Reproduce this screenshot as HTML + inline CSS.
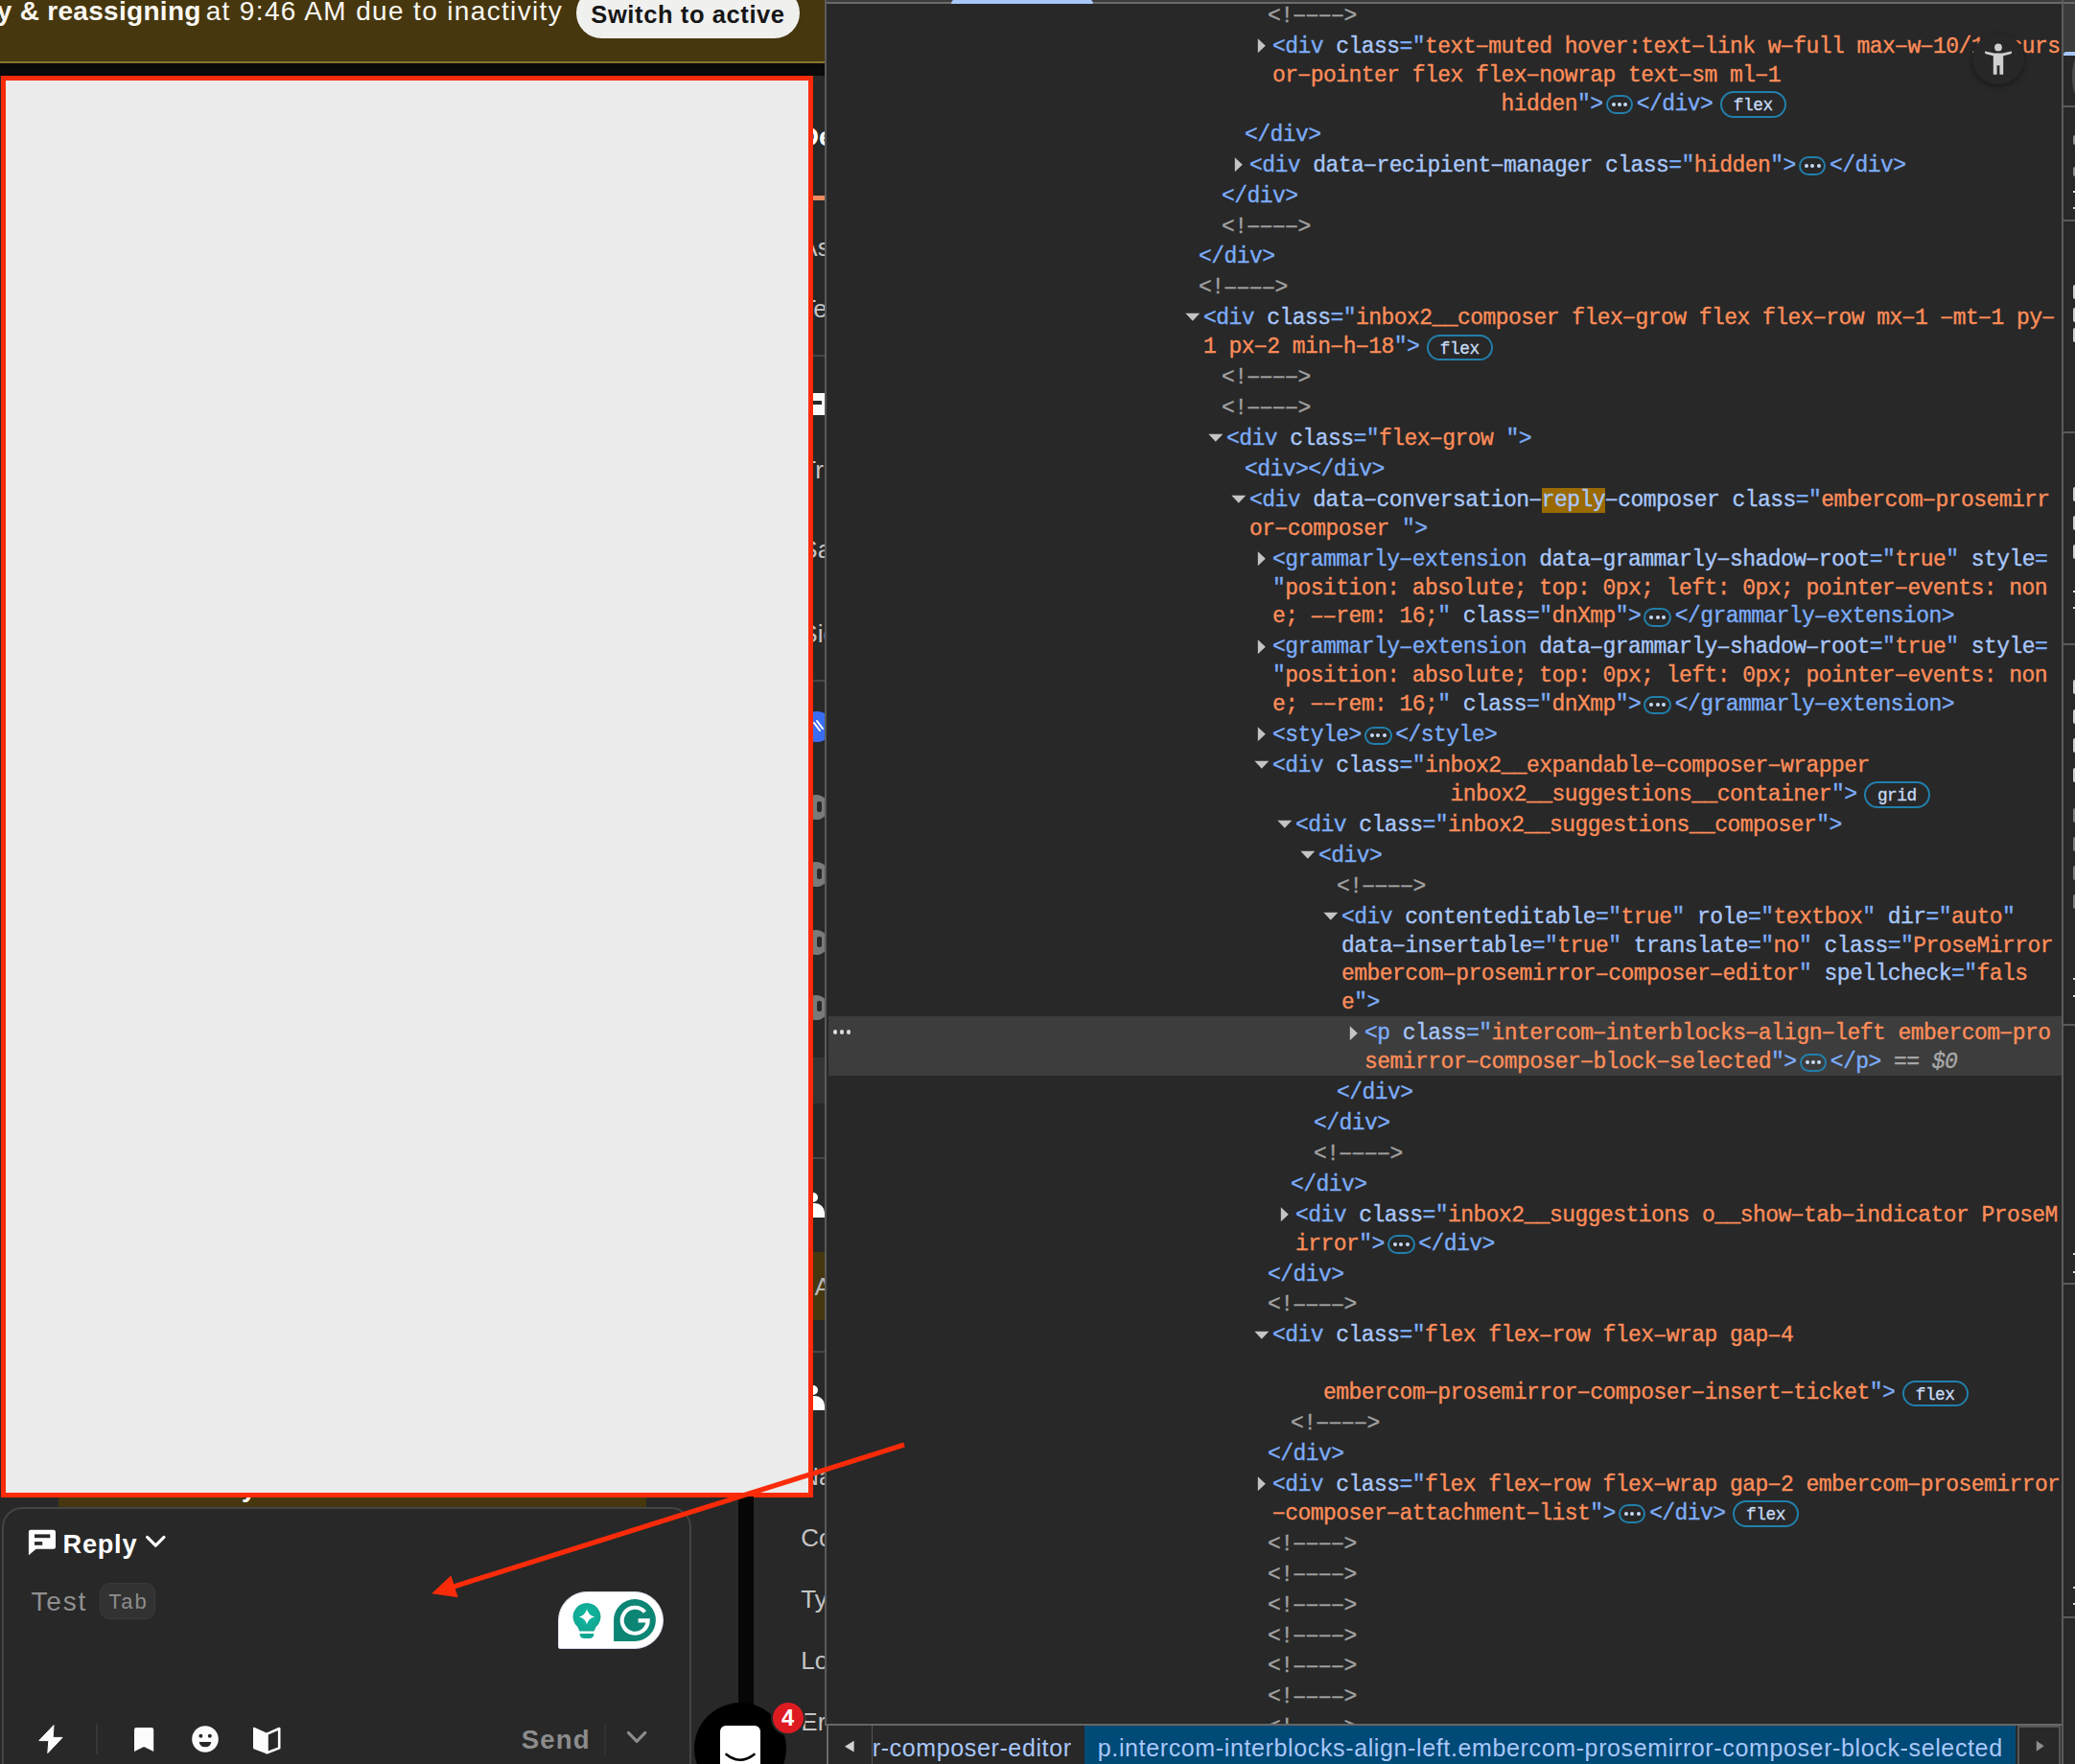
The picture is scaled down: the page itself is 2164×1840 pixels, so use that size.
<!DOCTYPE html>
<html><head><meta charset="utf-8"><title>Inbox</title>
<style>
*{box-sizing:border-box}
html,body{margin:0;padding:0;background:#282828}
body{width:2164px;height:1840px;overflow:hidden;position:relative;background:#282828;font-family:"Liberation Sans",sans-serif}
#app{position:absolute;left:0;top:0;width:860px;height:1840px;background:#282828;overflow:hidden}
#dt{position:absolute;left:860px;top:0;width:1304px;height:1840px;background:#282828;overflow:hidden}
/* devtools tree: coordinates are page coords, shifted */
#tree{position:absolute;left:-860px;top:0;width:2164px;height:1798px;overflow:hidden}
.ln{position:absolute;white-space:pre;font-family:"Liberation Mono",monospace;font-size:23px;letter-spacing:-0.557px;line-height:29.9px;height:29.9px;color:#7cacf8;-webkit-text-stroke:0.35px}
.t{color:#7cacf8}.a{color:#a8c7fa}.v{color:#fe8d59}.c{color:#a1a1a1}
.h{color:#a8c7fa;background:#9a6a00}
.ln u{text-decoration:none;position:relative;top:1.2px}
.d{color:#a8a8a8;font-style:italic}
.el{display:inline-block;vertical-align:top;width:28.5px;height:19.5px;margin:4.6px 3.7px 0 3.2px;border:2px solid #217fab;border-radius:10px;position:relative}
.el i{position:absolute;top:5.7px;width:4px;height:4px;border-radius:50%;background:#c7dbf5}
.el i:nth-child(1){left:4px}.el i:nth-child(2){left:10.3px}.el i:nth-child(3){left:16.6px}
.bd{display:inline-block;vertical-align:top;height:27.8px;margin:0.3px 0 0 7.4px;padding:0 12.1px;border:2px solid #217fab;border-radius:14px;font-size:17.8px;letter-spacing:-0.45px;line-height:26px;color:#c7dbf5;-webkit-text-stroke:0.3px}
.ar{position:absolute;fill:#c4c4c4}
.selrow{position:absolute;left:864px;width:1286px;background:#3d3d3d}
.seldots{position:absolute;left:868.5px;width:22px;height:5px}
.seldots i{position:absolute;top:0;width:4.6px;height:4.6px;border-radius:50%;background:#dadada}
.seldots i:nth-child(1){left:0}.seldots i:nth-child(2){left:7.1px}.seldots i:nth-child(3){left:14.3px}
</style></head>
<body>
<div id="app">

<style>
#banner{position:absolute;left:0;top:0;width:860px;height:64px;background:#46370f;border-bottom:0}
#bline{position:absolute;left:0;top:63.5px;width:860px;height:2.5px;background:#8a7332}
#bblack{position:absolute;left:0;top:66px;width:860px;height:13px;background:#0a0a0a}
#btxt{position:absolute;left:-3.3px;top:-7.8px;white-space:pre;color:#fbf8f2;font-size:28px;line-height:40px;height:40px}
#btxt b{font-weight:bold;letter-spacing:.3px}
#btxt span{letter-spacing:1.35px;font-size:28px;margin-left:-4.2px}
#swbtn{position:absolute;left:601px;top:-13px;width:233px;height:53px;border-radius:27px;background:#f0f0ef;color:#161616;font-weight:bold;font-size:25.5px;letter-spacing:.6px;line-height:57px;text-align:center;white-space:pre}
#redbox{position:absolute;left:1.2px;top:78.5px;width:847.3px;height:1483.5px;background:#ebebeb;border:5.3px solid #f92b09}
.stripL{position:absolute;left:835.3px;white-space:pre;font-size:26px;line-height:30px;height:30px;color:#c4c4c4}
#comp{position:absolute;left:1.8px;top:1572px;width:719.3px;height:300px;border:2px solid #444;border-radius:21px}
#brown{position:absolute;left:61px;top:1561px;width:613px;height:11px;background:#46370f}
#vbar{position:absolute;left:770px;top:1561px;width:16px;height:290px;background:#060606}
#mcircle{position:absolute;left:724px;top:1776px;width:96px;height:96px;border-radius:50%;background:#000}
#mwhite{position:absolute;left:751px;top:1800px;width:42px;height:60px;border-radius:6px;background:#fff}
#badge{position:absolute;left:803.6px;top:1774px;width:36px;height:36px;border-radius:50%;background:#df1b22;border:2.2px solid #282828;color:#fff;font-weight:bold;font-size:23.6px;line-height:32.2px;text-align:center}
</style>
<div id="banner"></div><div id="bline"></div><div id="bblack"></div>
<div id="btxt"><b>y &amp; reassigning</b><span> at 9:46 AM due to inactivity</span></div>
<div id="swbtn">Switch to active</div>

<!-- right-side strip content (mostly hidden behind red box) -->
<div class="stripL" style="top:127.7px;left:833.8px;color:#fff;font-weight:bold;font-size:28px">De</div>
<div style="position:absolute;left:840px;top:204.3px;width:20px;height:5px;background:#ee8a5e"></div>
<div class="stripL" style="top:243px">As</div>
<div class="stripL" style="top:306.5px">Te</div>
<div style="position:absolute;left:840px;top:370px;width:20px;height:1.5px;background:#464646"></div>
<div style="position:absolute;left:840px;top:409.5px;width:20px;height:23px;background:#fafafa"></div>
<div style="position:absolute;left:846px;top:417.5px;width:10.5px;height:4px;background:#282828"></div>
<div class="stripL" style="top:475px">Tr</div>
<div class="stripL" style="top:558px">Sa</div>
<div class="stripL" style="top:645.5px">Sid</div>
<div style="position:absolute;left:840px;top:709px;width:20px;height:1.5px;background:#464646"></div>
<div style="position:absolute;left:836px;top:742px;width:32px;height:32px;border-radius:50%;background:#3a6df2"></div>
<svg style="position:absolute;left:846px;top:748px" width="16" height="20" viewBox="0 0 16 20"><path d="M3 6 L9 14 M6 4 L12 12" stroke="#fff" stroke-width="2" fill="none" stroke-linecap="round"/></svg>
<div style="position:absolute;left:838px;top:829px;width:26px;height:26px;border-radius:50%;background:#7a7a7a"></div>
<div style="position:absolute;left:838px;top:899px;width:26px;height:26px;border-radius:50%;background:#7a7a7a"></div>
<div style="position:absolute;left:838px;top:970px;width:26px;height:26px;border-radius:50%;background:#7a7a7a"></div>
<div style="position:absolute;left:838px;top:1037.5px;width:26px;height:26px;border-radius:50%;background:#7a7a7a"></div>
<div style="position:absolute;left:852px;top:836px;width:5px;height:11px;background:#282828;border-radius:2px"></div>
<div style="position:absolute;left:852px;top:906px;width:5px;height:11px;background:#282828;border-radius:2px"></div>
<div style="position:absolute;left:852px;top:977px;width:5px;height:11px;background:#282828;border-radius:2px"></div>
<div style="position:absolute;left:852px;top:1044px;width:5px;height:11px;background:#282828;border-radius:2px"></div>
<div style="position:absolute;left:840px;top:1103px;width:20px;height:48px;background:#343434"></div>
<div style="position:absolute;left:840px;top:1207px;width:20px;height:1.5px;background:#464646"></div>
<div style="position:absolute;left:843px;top:1244px;width:10px;height:10px;border-radius:50%;background:#fff"></div>
<div style="position:absolute;left:838px;top:1255px;width:22px;height:14.5px;border-radius:10px 10px 0 0;background:#fff"></div>
<div style="position:absolute;left:840px;top:1306px;width:20px;height:71px;background:#46370f"></div>
<div class="stripL" style="top:1326.5px;left:849.5px;color:#b8b8b8">A</div>
<div style="position:absolute;left:840px;top:1409px;width:20px;height:1.5px;background:#464646"></div>
<div style="position:absolute;left:843px;top:1445px;width:10px;height:10px;border-radius:50%;background:#fff"></div>
<div style="position:absolute;left:838px;top:1456px;width:22px;height:14.5px;border-radius:10px 10px 0 0;background:#fff"></div>
<div class="stripL" style="top:1524.5px">Na</div>
<div class="stripL" style="top:1588.5px">Co</div>
<div class="stripL" style="top:1652.5px">Ty</div>
<div class="stripL" style="top:1716.5px">Lo</div>
<div class="stripL" style="top:1781px">Er</div>

<div id="brown"></div>
<div style="position:absolute;left:252px;top:1552px;color:#fff;font-weight:bold;font-size:27px;line-height:1;height:19.5px;overflow:hidden;width:20px"><span style="position:relative;top:-13px">y</span></div>
<div id="redbox"></div>
<div id="vbar"></div>

<div id="comp"></div>
<!-- Reply icon -->
<svg style="position:absolute;left:29px;top:1594px" width="31" height="30" viewBox="0 0 31 30">
 <path d="M3 1.7 H26.5 Q29 1.7 29 4.2 V19.3 Q29 21.8 26.5 21.8 H8.6 L0.9 28.2 V3.8 Q0.9 1.7 3 1.7 Z" fill="#fff"/>
 <rect x="7" y="6.4" width="16.3" height="3.8" fill="#282828"/>
 <rect x="7" y="14.1" width="8.2" height="3.7" fill="#282828"/>
</svg>
<div style="position:absolute;left:65.5px;top:1594px;color:#fff;font-weight:bold;font-size:27.2px;line-height:34px;height:34px;white-space:pre;letter-spacing:.75px">Reply</div>
<svg style="position:absolute;left:150px;top:1599px" width="25" height="18" viewBox="0 0 25 18"><path d="M3.6 4.4 L12.3 13.2 L21 4.4" stroke="#fff" stroke-width="3.1" fill="none" stroke-linecap="round" stroke-linejoin="round"/></svg>
<div style="position:absolute;left:32.5px;top:1653.8px;color:#8f8f8f;font-size:28px;line-height:34px;height:34px;white-space:pre;letter-spacing:1.8px">Test</div>
<div style="position:absolute;left:104px;top:1651px;width:58px;height:38px;border-radius:10px;background:#323232;border:1.5px solid #3a3a3a;color:#8d8d8d;font-size:22px;line-height:37.6px;text-align:center;letter-spacing:2px;text-indent:2px">Tab</div>

<!-- toolbar icons -->
<svg style="position:absolute;left:38px;top:1796px" width="30" height="36" viewBox="0 0 30 36"><path d="M18 3.6 L2.8 19.6 H12.8 L11.8 32.6 L27 16.4 H17.2 Z" fill="#fcfcfc" stroke="#fcfcfc" stroke-width="1" stroke-linejoin="round"/></svg>
<div style="position:absolute;left:100.2px;top:1798px;width:1.8px;height:32px;background:#373737"></div>
<svg style="position:absolute;left:138px;top:1800px" width="24" height="30" viewBox="0 0 24 30"><path d="M4 2 H20 Q22.2 2 22.2 4.2 V27 L12.1 22 L2 27 V4.2 Q2 2 4 2 Z" fill="#fcfcfc"/></svg>
<svg style="position:absolute;left:199px;top:1799px" width="30" height="30" viewBox="0 0 30 30"><circle cx="15" cy="15" r="13.8" fill="#fcfcfc"/><circle cx="10.4" cy="11.7" r="2" fill="#282828"/><circle cx="19.8" cy="11.7" r="2" fill="#282828"/><path d="M8.7 17.9 H21.3 Q20.6 23.2 15 23.2 Q9.4 23.2 8.7 17.9 Z" fill="#282828"/></svg>
<svg style="position:absolute;left:262px;top:1799px" width="33" height="33" viewBox="0 0 33 33"><path d="M2 3.6 Q2 2.4 3.2 2.8 L16.5 8.8 V30.4 L3.2 25.6 Q2 25.2 2 24 Z" fill="#fcfcfc"/><path d="M16.5 9.6 L29.2 4 V24.4 L16.5 29.2 Z" fill="none" stroke="#fcfcfc" stroke-width="2.6" stroke-linejoin="round"/></svg>

<div style="position:absolute;left:543.8px;top:1797.6px;letter-spacing:1.1px;color:#8c8c8c;font-weight:bold;font-size:27.6px;line-height:34px;height:34px;white-space:pre">Send</div>
<div style="position:absolute;left:630px;top:1798px;width:1.6px;height:32px;background:#313131"></div>
<svg style="position:absolute;left:651px;top:1802px" width="26" height="20" viewBox="0 0 26 20"><path d="M4.4 5.4 L13.1 14.3 L21.8 5.4" stroke="#8c8c8c" stroke-width="3.1" fill="none" stroke-linecap="round" stroke-linejoin="round"/></svg>

<!-- Grammarly widget -->
<div style="position:absolute;left:582px;top:1659.7px;width:110px;height:60.6px;background:#fff;border:1.6px solid #d9d9ea;border-radius:30px 30px 30px 2px"></div>
<svg style="position:absolute;left:594px;top:1668px" width="40" height="46" viewBox="0 0 40 46">
 <defs><radialGradient id="gb" cx="50%" cy="45%" r="60%"><stop offset="0" stop-color="#0fb8a2"/><stop offset="1" stop-color="#12a590"/></radialGradient></defs>
 <path d="M18 4 A14.3 14.3 0 0 1 27.4 29.2 L25.6 33.6 H10.4 L8.6 29.2 A14.3 14.3 0 0 1 18 4 Z" fill="url(#gb)"/>
 <path d="M10.6 36.1 H25.4 Q25.4 40.9 21.2 40.9 H14.8 Q10.6 40.9 10.6 36.1 Z" fill="#10a792"/>
 <path d="M18 10.4 Q19.6 16.8 26.2 18.4 Q19.6 20 18 26.6 Q16.4 20 9.8 18.4 Q16.4 16.8 18 10.4 Z" fill="#fff"/>
</svg>
<svg style="position:absolute;left:638px;top:1666px" width="48" height="48" viewBox="0 0 48 48">
 <path d="M24 2.1 A21.9 21.9 0 0 1 24 45.9 H2.1 V24 A21.9 21.9 0 0 1 24 2.1 Z" fill="#0c8574"/>
 <path d="M34.5 15.5 A13.5 13.5 0 1 0 37.7 24.4 H27.6" fill="none" stroke="#fff" stroke-width="4.1"/>
</svg>

<div id="mcircle"></div><div id="mwhite"></div>
<svg style="position:absolute;left:752px;top:1824px" width="40" height="16" viewBox="0 0 40 16"><path d="M5.5 6 Q20 17.5 34.5 6" stroke="#000" stroke-width="2.6" fill="none" stroke-linecap="round"/></svg>
<div id="badge">4</div>

</div>
<div id="dt">
  <div id="tree">
<div class="ln" style="left:1322.10px;top:3.15px"><span class="c">&lt;!<u>−</u><u>−</u><u>−</u><u>−</u>&gt;</span></div>
<svg class="ar" style="left:1311.20px;top:40.42px" width="10" height="16" viewBox="0 0 10 16"><path d="M0.8 0.3 L0.8 15.3 L8.8 7.8 Z"/></svg>
<div class="ln" style="left:1327.10px;top:35.06px"><span class="t">&lt;div </span><span class="a">class</span><span class="t">=&quot;</span><span class="v">text<u>−</u>muted hover:text<u>−</u>link w<u>−</u>full max<u>−</u>w<u>−</u>10/12 curs</span></div>
<div class="ln" style="left:1327.10px;top:64.98px"><span class="v">or<u>−</u>pointer flex flex<u>−</u>nowrap text<u>−</u>sm ml<u>−</u>1</span></div>
<div class="ln" style="left:1327.10px;top:94.89px"><span class="v">                  hidden</span><span class="t">&quot;&gt;</span><span class="el"><i></i><i></i><i></i></span><span class="t">&lt;/div&gt;</span><span class="bd">flex</span></div>
<div class="ln" style="left:1298.10px;top:126.81px"><span class="t">&lt;/div&gt;</span></div>
<svg class="ar" style="left:1287.20px;top:164.08px" width="10" height="16" viewBox="0 0 10 16"><path d="M0.8 0.3 L0.8 15.3 L8.8 7.8 Z"/></svg>
<div class="ln" style="left:1303.10px;top:158.72px"><span class="t">&lt;div </span><span class="a">data<u>−</u>recipient<u>−</u>manager class</span><span class="t">=&quot;</span><span class="v">hidden</span><span class="t">&quot;&gt;</span><span class="el"><i></i><i></i><i></i></span><span class="t">&lt;/div&gt;</span></div>
<div class="ln" style="left:1274.10px;top:190.64px"><span class="t">&lt;/div&gt;</span></div>
<div class="ln" style="left:1274.10px;top:222.55px"><span class="c">&lt;!<u>−</u><u>−</u><u>−</u><u>−</u>&gt;</span></div>
<div class="ln" style="left:1250.10px;top:254.47px"><span class="t">&lt;/div&gt;</span></div>
<div class="ln" style="left:1250.10px;top:286.38px"><span class="c">&lt;!<u>−</u><u>−</u><u>−</u><u>−</u>&gt;</span></div>
<svg class="ar" style="left:1235.90px;top:326.46px" width="16" height="10" viewBox="0 0 16 10"><path d="M0.3 0.8 L15.3 0.8 L7.8 8.8 Z"/></svg>
<div class="ln" style="left:1255.10px;top:318.30px"><span class="t">&lt;div </span><span class="a">class</span><span class="t">=&quot;</span><span class="v">inbox2__composer flex<u>−</u>grow flex flex<u>−</u>row mx<u>−</u>1 <u>−</u>mt<u>−</u>1 py<u>−</u></span></div>
<div class="ln" style="left:1255.10px;top:348.22px"><span class="v">1 px<u>−</u>2 min<u>−</u>h<u>−</u>18</span><span class="t">&quot;&gt;</span><span class="bd">flex</span></div>
<div class="ln" style="left:1274.10px;top:380.13px"><span class="c">&lt;!<u>−</u><u>−</u><u>−</u><u>−</u>&gt;</span></div>
<div class="ln" style="left:1274.10px;top:412.05px"><span class="c">&lt;!<u>−</u><u>−</u><u>−</u><u>−</u>&gt;</span></div>
<svg class="ar" style="left:1259.90px;top:452.12px" width="16" height="10" viewBox="0 0 16 10"><path d="M0.3 0.8 L15.3 0.8 L7.8 8.8 Z"/></svg>
<div class="ln" style="left:1279.10px;top:443.96px"><span class="t">&lt;div </span><span class="a">class</span><span class="t">=&quot;</span><span class="v">flex<u>−</u>grow </span><span class="t">&quot;&gt;</span></div>
<div class="ln" style="left:1298.10px;top:475.88px"><span class="t">&lt;div&gt;&lt;/div&gt;</span></div>
<svg class="ar" style="left:1283.90px;top:515.95px" width="16" height="10" viewBox="0 0 16 10"><path d="M0.3 0.8 L15.3 0.8 L7.8 8.8 Z"/></svg>
<div class="ln" style="left:1303.10px;top:507.79px"><span class="t">&lt;div </span><span class="a">data<u>−</u>conversation<u>−</u></span><span class="h">reply</span><span class="a"><u>−</u>composer class</span><span class="t">=&quot;</span><span class="v">embercom<u>−</u>prosemirr</span></div>
<div class="ln" style="left:1303.10px;top:537.71px"><span class="v">or<u>−</u>composer </span><span class="t">&quot;&gt;</span></div>
<svg class="ar" style="left:1311.20px;top:574.98px" width="10" height="16" viewBox="0 0 10 16"><path d="M0.8 0.3 L0.8 15.3 L8.8 7.8 Z"/></svg>
<div class="ln" style="left:1327.10px;top:569.62px"><span class="t">&lt;grammarly<u>−</u>extension </span><span class="a">data<u>−</u>grammarly<u>−</u>shadow<u>−</u>root</span><span class="t">=&quot;</span><span class="v">true</span><span class="t">&quot; </span><span class="a">style</span><span class="t">=</span></div>
<div class="ln" style="left:1327.10px;top:599.54px"><span class="t">&quot;</span><span class="v">position: absolute; top: 0px; left: 0px; pointer<u>−</u>events: non</span></div>
<div class="ln" style="left:1327.10px;top:629.45px"><span class="v">e; <u>−</u><u>−</u>rem: 16;</span><span class="t">&quot; </span><span class="a">class</span><span class="t">=&quot;</span><span class="v">dnXmp</span><span class="t">&quot;&gt;</span><span class="el"><i></i><i></i><i></i></span><span class="t">&lt;/grammarly<u>−</u>extension&gt;</span></div>
<svg class="ar" style="left:1311.20px;top:666.72px" width="10" height="16" viewBox="0 0 10 16"><path d="M0.8 0.3 L0.8 15.3 L8.8 7.8 Z"/></svg>
<div class="ln" style="left:1327.10px;top:661.37px"><span class="t">&lt;grammarly<u>−</u>extension </span><span class="a">data<u>−</u>grammarly<u>−</u>shadow<u>−</u>root</span><span class="t">=&quot;</span><span class="v">true</span><span class="t">&quot; </span><span class="a">style</span><span class="t">=</span></div>
<div class="ln" style="left:1327.10px;top:691.28px"><span class="t">&quot;</span><span class="v">position: absolute; top: 0px; left: 0px; pointer<u>−</u>events: non</span></div>
<div class="ln" style="left:1327.10px;top:721.20px"><span class="v">e; <u>−</u><u>−</u>rem: 16;</span><span class="t">&quot; </span><span class="a">class</span><span class="t">=&quot;</span><span class="v">dnXmp</span><span class="t">&quot;&gt;</span><span class="el"><i></i><i></i><i></i></span><span class="t">&lt;/grammarly<u>−</u>extension&gt;</span></div>
<svg class="ar" style="left:1311.20px;top:758.47px" width="10" height="16" viewBox="0 0 10 16"><path d="M0.8 0.3 L0.8 15.3 L8.8 7.8 Z"/></svg>
<div class="ln" style="left:1327.10px;top:753.11px"><span class="t">&lt;style&gt;</span><span class="el"><i></i><i></i><i></i></span><span class="t">&lt;/style&gt;</span></div>
<svg class="ar" style="left:1307.90px;top:793.18px" width="16" height="10" viewBox="0 0 16 10"><path d="M0.3 0.8 L15.3 0.8 L7.8 8.8 Z"/></svg>
<div class="ln" style="left:1327.10px;top:785.03px"><span class="t">&lt;div </span><span class="a">class</span><span class="t">=&quot;</span><span class="v">inbox2__expandable<u>−</u>composer<u>−</u>wrapper</span></div>
<div class="ln" style="left:1327.10px;top:814.94px"><span class="v">              inbox2__suggestions__container</span><span class="t">&quot;&gt;</span><span class="bd">grid</span></div>
<svg class="ar" style="left:1331.90px;top:855.01px" width="16" height="10" viewBox="0 0 16 10"><path d="M0.3 0.8 L15.3 0.8 L7.8 8.8 Z"/></svg>
<div class="ln" style="left:1351.10px;top:846.86px"><span class="t">&lt;div </span><span class="a">class</span><span class="t">=&quot;</span><span class="v">inbox2__suggestions__composer</span><span class="t">&quot;&gt;</span></div>
<svg class="ar" style="left:1355.90px;top:886.93px" width="16" height="10" viewBox="0 0 16 10"><path d="M0.3 0.8 L15.3 0.8 L7.8 8.8 Z"/></svg>
<div class="ln" style="left:1375.10px;top:878.77px"><span class="t">&lt;div&gt;</span></div>
<div class="ln" style="left:1394.10px;top:910.69px"><span class="c">&lt;!<u>−</u><u>−</u><u>−</u><u>−</u>&gt;</span></div>
<svg class="ar" style="left:1379.90px;top:950.76px" width="16" height="10" viewBox="0 0 16 10"><path d="M0.3 0.8 L15.3 0.8 L7.8 8.8 Z"/></svg>
<div class="ln" style="left:1399.10px;top:942.60px"><span class="t">&lt;div </span><span class="a">contenteditable</span><span class="t">=&quot;</span><span class="v">true</span><span class="t">&quot; </span><span class="a">role</span><span class="t">=&quot;</span><span class="v">textbox</span><span class="t">&quot; </span><span class="a">dir</span><span class="t">=&quot;</span><span class="v">auto</span><span class="t">&quot;</span></div>
<div class="ln" style="left:1399.10px;top:972.51px"><span class="a">data<u>−</u>insertable</span><span class="t">=&quot;</span><span class="v">true</span><span class="t">&quot; </span><span class="a">translate</span><span class="t">=&quot;</span><span class="v">no</span><span class="t">&quot; </span><span class="a">class</span><span class="t">=&quot;</span><span class="v">ProseMirror</span></div>
<div class="ln" style="left:1399.10px;top:1002.43px"><span class="v">embercom<u>−</u>prosemirror<u>−</u>composer<u>−</u>editor</span><span class="t">&quot; </span><span class="a">spellcheck</span><span class="t">=&quot;</span><span class="v">fals</span></div>
<div class="ln" style="left:1399.10px;top:1032.35px"><span class="v">e</span><span class="t">&quot;&gt;</span></div>
<div class="selrow" style="top:1060.36px;height:61.83px"></div>
<div class="seldots" style="top:1074.32px"><i></i><i></i><i></i></div>
<svg class="ar" style="left:1407.20px;top:1069.62px" width="10" height="16" viewBox="0 0 10 16"><path d="M0.8 0.3 L0.8 15.3 L8.8 7.8 Z"/></svg>
<div class="ln" style="left:1423.10px;top:1064.26px"><span class="t">&lt;p </span><span class="a">class</span><span class="t">=&quot;</span><span class="v">intercom<u>−</u>interblocks<u>−</u>align<u>−</u>left embercom<u>−</u>pro</span></div>
<div class="ln" style="left:1423.10px;top:1094.17px"><span class="v">semirror<u>−</u>composer<u>−</u>block<u>−</u>selected</span><span class="t">&quot;&gt;</span><span class="el"><i></i><i></i><i></i></span><span class="t">&lt;/p&gt;</span><span class="d"> == $0</span></div>
<div class="ln" style="left:1394.10px;top:1126.09px"><span class="t">&lt;/div&gt;</span></div>
<div class="ln" style="left:1370.10px;top:1158.00px"><span class="t">&lt;/div&gt;</span></div>
<div class="ln" style="left:1370.10px;top:1189.92px"><span class="c">&lt;!<u>−</u><u>−</u><u>−</u><u>−</u>&gt;</span></div>
<div class="ln" style="left:1346.10px;top:1221.83px"><span class="t">&lt;/div&gt;</span></div>
<svg class="ar" style="left:1335.20px;top:1259.11px" width="10" height="16" viewBox="0 0 10 16"><path d="M0.8 0.3 L0.8 15.3 L8.8 7.8 Z"/></svg>
<div class="ln" style="left:1351.10px;top:1253.75px"><span class="t">&lt;div </span><span class="a">class</span><span class="t">=&quot;</span><span class="v">inbox2__suggestions o__show<u>−</u>tab<u>−</u>indicator ProseM</span></div>
<div class="ln" style="left:1351.10px;top:1283.66px"><span class="v">irror</span><span class="t">&quot;&gt;</span><span class="el"><i></i><i></i><i></i></span><span class="t">&lt;/div&gt;</span></div>
<div class="ln" style="left:1322.10px;top:1315.58px"><span class="t">&lt;/div&gt;</span></div>
<div class="ln" style="left:1322.10px;top:1347.49px"><span class="c">&lt;!<u>−</u><u>−</u><u>−</u><u>−</u>&gt;</span></div>
<svg class="ar" style="left:1307.90px;top:1387.57px" width="16" height="10" viewBox="0 0 16 10"><path d="M0.3 0.8 L15.3 0.8 L7.8 8.8 Z"/></svg>
<div class="ln" style="left:1327.10px;top:1379.41px"><span class="t">&lt;div </span><span class="a">class</span><span class="t">=&quot;</span><span class="v">flex flex<u>−</u>row flex<u>−</u>wrap gap<u>−</u>4</span></div>
<div class="ln" style="left:1327.10px;top:1439.24px"><span class="v">    embercom<u>−</u>prosemirror<u>−</u>composer<u>−</u>insert<u>−</u>ticket</span><span class="t">&quot;&gt;</span><span class="bd">flex</span></div>
<div class="ln" style="left:1346.10px;top:1471.15px"><span class="c">&lt;!<u>−</u><u>−</u><u>−</u><u>−</u>&gt;</span></div>
<div class="ln" style="left:1322.10px;top:1503.07px"><span class="t">&lt;/div&gt;</span></div>
<svg class="ar" style="left:1311.20px;top:1540.34px" width="10" height="16" viewBox="0 0 10 16"><path d="M0.8 0.3 L0.8 15.3 L8.8 7.8 Z"/></svg>
<div class="ln" style="left:1327.10px;top:1534.98px"><span class="t">&lt;div </span><span class="a">class</span><span class="t">=&quot;</span><span class="v">flex flex<u>−</u>row flex<u>−</u>wrap gap<u>−</u>2 embercom<u>−</u>prosemirror</span></div>
<div class="ln" style="left:1327.10px;top:1564.90px"><span class="v"><u>−</u>composer<u>−</u>attachment<u>−</u>list</span><span class="t">&quot;&gt;</span><span class="el"><i></i><i></i><i></i></span><span class="t">&lt;/div&gt;</span><span class="bd">flex</span></div>
<div class="ln" style="left:1322.10px;top:1596.81px"><span class="c">&lt;!<u>−</u><u>−</u><u>−</u><u>−</u>&gt;</span></div>
<div class="ln" style="left:1322.10px;top:1628.73px"><span class="c">&lt;!<u>−</u><u>−</u><u>−</u><u>−</u>&gt;</span></div>
<div class="ln" style="left:1322.10px;top:1660.64px"><span class="c">&lt;!<u>−</u><u>−</u><u>−</u><u>−</u>&gt;</span></div>
<div class="ln" style="left:1322.10px;top:1692.56px"><span class="c">&lt;!<u>−</u><u>−</u><u>−</u><u>−</u>&gt;</span></div>
<div class="ln" style="left:1322.10px;top:1724.47px"><span class="c">&lt;!<u>−</u><u>−</u><u>−</u><u>−</u>&gt;</span></div>
<div class="ln" style="left:1322.10px;top:1756.39px"><span class="c">&lt;!<u>−</u><u>−</u><u>−</u><u>−</u>&gt;</span></div>
<div class="ln" style="left:1322.10px;top:1788.30px"><span class="c">&lt;!<u>−</u><u>−</u><u>−</u><u>−</u>&gt;</span></div>
  </div>

<style>
#dt .vline{position:absolute;top:0;width:2.3px;height:1840px;background:#5b5b5b}
#bc{position:absolute;left:0;top:1797.8px;width:1290px;height:43px;background:#282828;border-top:2.6px solid #666}
.crumb{position:absolute;top:0;height:42px;line-height:47px;font-size:25px;letter-spacing:.63px;white-space:pre;color:#a8c7fa}
</style>
<div style="position:absolute;left:0;top:0;width:1304px;height:1.6px;background:#3d3d3d"></div>
<div style="position:absolute;left:0;top:1.6px;width:1304px;height:2.5px;background:#6a6a6a"></div>
<div style="position:absolute;left:132px;top:-1.5px;width:148px;height:5.8px;border-radius:5px 5px 0 0;background:#a8c7fa"></div>
<div class="vline" style="left:-0.3px"></div>
<!-- a11y floating button -->
<div style="position:absolute;left:1197.1px;top:34.5px;width:53.6px;height:53.6px;border-radius:50%;background:#272727;box-shadow:0 2px 6px rgba(0,0,0,.4)"></div>
<svg style="position:absolute;left:1207px;top:44px" width="34" height="36" viewBox="0 0 34 36"><circle cx="17" cy="5.4" r="3.9" fill="#cfcfcf"/><path d="M3.6 9.6 Q3 9.4 3 10.6 Q3 12 4 12.3 L11.8 14.2 V33.8 H15.6 V24.2 H18.4 V33.8 H22.2 V14.2 L30 12.3 Q31 12 31 10.6 Q31 9.4 30.4 9.6 L21.4 11.4 H12.6 Z" fill="#cfcfcf"/></svg>
<!-- right strip (cropped styles pane) -->
<div style="position:absolute;left:1292.3px;top:4px;width:12px;height:50px;background:#3b3b3b"></div>
<div style="position:absolute;left:1292.3px;top:54px;width:12px;height:3.6px;background:#a8c7fa;border-radius:3px 0 0 0"></div>
<div style="position:absolute;left:1292.3px;top:110.2px;width:12px;height:2.1px;background:#5a5a5a"></div>
<div style="position:absolute;left:1292.3px;top:229.0px;width:12px;height:2.1px;background:#5a5a5a"></div>
<div style="position:absolute;left:1292.3px;top:450.3px;width:12px;height:2.1px;background:#5a5a5a"></div>
<div style="position:absolute;left:1292.3px;top:671.0px;width:12px;height:2.1px;background:#5a5a5a"></div>
<div style="position:absolute;left:1292.3px;top:1068.0px;width:12px;height:2.1px;background:#5a5a5a"></div>
<div style="position:absolute;left:1292.3px;top:1338.0px;width:12px;height:2.1px;background:#5a5a5a"></div>
<div style="position:absolute;left:1292.3px;top:1686.0px;width:12px;height:2.1px;background:#5a5a5a"></div>
<div style="position:absolute;left:1301.6px;top:508px;width:2.4px;height:15px;background:#cfcfcf;border-radius:2px 0 0 2px"></div>
<div style="position:absolute;left:1301.6px;top:538px;width:2.4px;height:15px;background:#cfcfcf;border-radius:2px 0 0 2px"></div>
<div style="position:absolute;left:1301.6px;top:568px;width:2.4px;height:15px;background:#cfcfcf;border-radius:2px 0 0 2px"></div>
<div style="position:absolute;left:1301.6px;top:709px;width:2.4px;height:15px;background:#cfcfcf;border-radius:2px 0 0 2px"></div>
<div style="position:absolute;left:1301.6px;top:740px;width:2.4px;height:15px;background:#cfcfcf;border-radius:2px 0 0 2px"></div>
<div style="position:absolute;left:1301.6px;top:770px;width:2.4px;height:15px;background:#cfcfcf;border-radius:2px 0 0 2px"></div>
<div style="position:absolute;left:1301.6px;top:801px;width:2.4px;height:15px;background:#cfcfcf;border-radius:2px 0 0 2px"></div>
<div style="position:absolute;left:1301.6px;top:843px;width:2.4px;height:15px;background:#7c7c7c;border-radius:2px 0 0 2px"></div>
<div style="position:absolute;left:1301.6px;top:873px;width:2.4px;height:15px;background:#7c7c7c;border-radius:2px 0 0 2px"></div>
<div style="position:absolute;left:1301.6px;top:903px;width:2.4px;height:15px;background:#7c7c7c;border-radius:2px 0 0 2px"></div>
<div style="position:absolute;left:1301.6px;top:933px;width:2.4px;height:15px;background:#7c7c7c;border-radius:2px 0 0 2px"></div>
<div style="position:absolute;left:1301.6px;top:141px;width:2.4px;height:10px;background:#8c8c8c;border-radius:2px 0 0 2px"></div>
<div style="position:absolute;left:1301.6px;top:174px;width:2.4px;height:10px;background:#8c8c8c;border-radius:2px 0 0 2px"></div>
<div style="position:absolute;left:1301.5px;top:199px;width:3px;height:2.4px;background:#d8d8d8"></div>
<div style="position:absolute;left:1301.5px;top:216px;width:3px;height:2.4px;background:#d8d8d8"></div>
<div style="position:absolute;left:1301.5px;top:616px;width:3px;height:2.4px;background:#d8d8d8"></div>
<div style="position:absolute;left:1301.5px;top:633px;width:3px;height:2.4px;background:#d8d8d8"></div>
<div style="position:absolute;left:1301.5px;top:1020px;width:3px;height:2.4px;background:#d8d8d8"></div>
<div style="position:absolute;left:1301.5px;top:1038px;width:3px;height:2.4px;background:#d8d8d8"></div>
<div style="position:absolute;left:1301.5px;top:1307px;width:3px;height:2.4px;background:#d8d8d8"></div>
<div style="position:absolute;left:1301.5px;top:1326px;width:3px;height:2.4px;background:#d8d8d8"></div>
<div style="position:absolute;left:1301.5px;top:1655px;width:3px;height:2.4px;background:#d8d8d8"></div>
<div style="position:absolute;left:1301.5px;top:1672px;width:3px;height:2.4px;background:#d8d8d8"></div>
<div style="position:absolute;left:1301.6px;top:297px;width:2.4px;height:15px;background:#cfcfcf;border-radius:2px 0 0 2px"></div>
<div style="position:absolute;left:1301.6px;top:321px;width:2.4px;height:15px;background:#cfcfcf;border-radius:2px 0 0 2px"></div>
<div style="position:absolute;left:1301.6px;top:342px;width:2.4px;height:15px;background:#cfcfcf;border-radius:2px 0 0 2px"></div>
<div style="position:absolute;left:1300.6px;top:61px;width:9px;height:38px;border-radius:50%;background:#4c4c4c"></div>
<div class="vline" style="left:1290px"></div>
<!-- breadcrumbs -->
<div id="bc">
  <div style="position:absolute;left:2.2px;top:0;width:47.5px;height:42px;border-left:2.4px solid #6a6a6a;border-right:1.8px solid #555"></div>
  <svg style="position:absolute;left:20px;top:14.8px" width="12" height="14" viewBox="0 0 12 14"><path d="M10.6 0.8 V12.6 L1 6.7 Z" fill="#d2d2d2"/></svg>
  <div class="crumb" style="left:49.7px;color:#a8c7fa" id="c1">r-composer-editor</div>
  <div style="position:absolute;left:271px;top:0;width:971px;height:42px;background:#004a77"></div>
  <div class="crumb" style="left:284.8px" id="c2">p.intercom-interblocks-align-left.embercom-prosemirror-composer-block-selected</div>
  <div style="position:absolute;left:1243.6px;top:0;width:45.5px;height:42px;border-left:2.2px solid #555;border-right:2.4px solid #555;border-top:2px solid #555"></div>
  <svg style="position:absolute;left:1262.5px;top:15px" width="10" height="13" viewBox="0 0 10 13"><path d="M0.8 0.8 V11.8 L8.8 6.3 Z" fill="#8d8d8d"/></svg>
</div>

</div>

<svg style="position:absolute;left:0;top:0;pointer-events:none" width="2164" height="1840" viewBox="0 0 2164 1840">
 <line x1="943" y1="1507.1" x2="470" y2="1655.9" stroke="#f92b09" stroke-width="5.2" stroke-linecap="butt"/>
 <path d="M450.2 1662.2 L470.4 1643.2 L477.7 1666.3 Z" fill="#f92b09"/>
</svg>

</body></html>
